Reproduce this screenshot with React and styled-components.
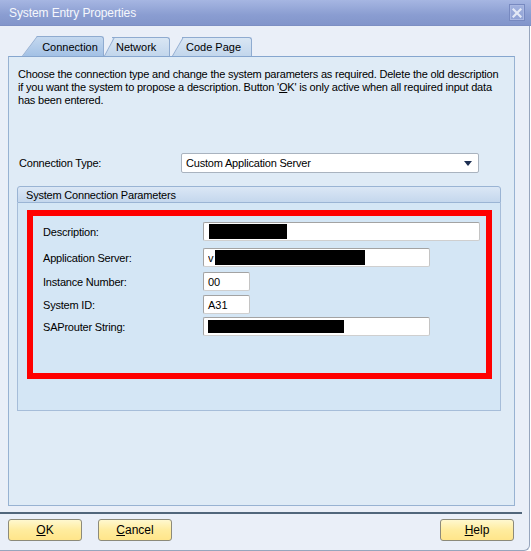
import React from 'react';
import styled, { createGlobalStyle } from 'styled-components';

const GlobalStyle = createGlobalStyle`
  html, body {
    margin: 0;
    padding: 0;
    background: #ffffff;
  }
  body {
    font-family: "Liberation Sans", Arial, sans-serif;
    font-size: 11px;
    color: #000;
  }
`;

const Window = styled.div`
  width: 531px;
  height: 551px;
  display: flex;
  flex-direction: column;
  overflow: hidden;
`;

const TitleBar = styled.div`
  height: 26px;
  flex: none;
  display: flex;
  align-items: center;
  justify-content: space-between;
  padding: 0 6px 0 9px;
  box-sizing: border-box;
  background: linear-gradient(#a6b6e2, #8a9dd1 60%, #8295cb);
  border-bottom: 1px solid #7d8fc3;
  color: #f5f7fc;
  font-size: 12px;
  letter-spacing: -0.1px;
`;

const CloseButton = styled.div`
  width: 16px;
  height: 17px;
  box-sizing: border-box;
  border: 1px solid #7789c0;
  background: linear-gradient(#a2b2df, #8fa1d4);
  box-shadow: inset 0 0 0 1px #aab8e2;
  display: flex;
  align-items: center;
  justify-content: center;
`;

const Body = styled.div`
  flex: 1;
  display: flex;
  flex-direction: column;
  background: #eaeff8;
  border-right: 1px solid #97a5bd;
  border-bottom: 1px solid #97a5bd;
  border-bottom-right-radius: 6px;
  width: 530px;
  box-sizing: border-box;
`;

const TabStrip = styled.div`
  display: flex;
  align-items: flex-end;
  height: 20px;
  margin-top: 10px;
  padding-left: 37px;
  position: relative;
  z-index: 1;
`;

const Tab = styled.div`
  position: relative;
  height: ${p => (p.$active ? 20 : 19)}px;
  width: ${p => p.$w}px;
  margin-left: ${p => p.$ml || 0}px;
  box-sizing: border-box;
  display: flex;
  align-items: center;
  justify-content: ${p => (p.$active ? 'center' : 'flex-start')};
  padding-left: ${p => (p.$active ? 0 : 4)}px;
  border-top: 1px solid #8fabd0;
  border-right: 1px solid #8fabd0;
  border-top-right-radius: 3px;
  background: ${p =>
    p.$active
      ? 'linear-gradient(#c4d8ef, #a3c1e5)'
      : 'linear-gradient(#d9e6f4, #c2d6ec)'};
  z-index: ${p => (p.$active ? 3 : p.$z)};
  color: #000;
  font-size: 11px;

  &::before {
    content: '';
    position: absolute;
    top: -1px;
    bottom: 0;
    left: -${p => p.$slant}px;
    width: ${p => p.$slant + 4}px;
    background: inherit;
    border-left: 1px solid #8fabd0;
    border-top: 1px solid #8fabd0;
    transform: skewX(-${p => p.$angle}deg);
    transform-origin: bottom left;
    z-index: -1;
  }
`;

const TabLabel = styled.span`
  position: relative;
`;

const Panel = styled.div`
  margin: 0 0 0 8px;
  width: 507px;
  height: 450px;
  box-sizing: border-box;
  background: #dfebf6;
  border: 1px solid #98b2d2;
  border-top-color: #86a6cf;
  padding: 11px 12px 0 9px;
  display: flex;
  flex-direction: column;
`;

const Intro = styled.p`
  margin: 0;
  line-height: 13px;
  white-space: nowrap;
  letter-spacing: -0.2px;
`;

const Underline = styled.span`
  text-decoration: underline;
`;

const TypeRow = styled.div`
  display: flex;
  align-items: center;
  margin-top: 46px;
  padding-left: 1px;
`;

const FieldLabel = styled.div`
  width: ${p => p.$w}px;
  flex: none;
  letter-spacing: -0.2px;
`;

const Select = styled.div`
  width: 298px;
  height: 20px;
  box-sizing: border-box;
  background: #fff;
  border: 1px solid #a9b3bf;
  border-radius: 2px;
  display: flex;
  align-items: center;
  justify-content: space-between;
  padding: 0 6px 0 4px;
  letter-spacing: -0.2px;
`;

const Caret = styled.span`
  width: 0;
  height: 0;
  border-left: 4px solid transparent;
  border-right: 4px solid transparent;
  border-top: 5px solid #1d2f52;
`;

const Group = styled.div`
  margin: 13px 0 0 -1px;
  width: 484px;
  height: 225px;
  display: flex;
  flex-direction: column;
`;

const GroupHeader = styled.div`
  height: 17px;
  box-sizing: border-box;
  border: 1px solid #9ab4d4;
  border-radius: 3px 3px 0 0;
  background: linear-gradient(#dbe7f5, #c4d7ed);
  padding-left: 8px;
  display: flex;
  align-items: center;
  letter-spacing: -0.2px;
`;

const GroupBody = styled.div`
  flex: 1;
  background: #d4e6f5;
  border: 1px solid #a6bdd9;
  border-top: none;
  padding: 7px 0 0 9px;
`;

const Highlight = styled.div`
  width: 465px;
  height: 169px;
  box-sizing: border-box;
  border: 6px solid #ff0000;
  padding-left: 10px;
  display: flex;
  flex-direction: column;
`;

const FieldRow = styled.div`
  display: flex;
  align-items: center;
  margin-top: ${p => p.$mt}px;
`;

const Input = styled.div`
  width: ${p => p.$w}px;
  height: 19px;
  box-sizing: border-box;
  background: #fff;
  border: 1px solid #a3a3a3;
  border-bottom-color: #cfcfcf;
  border-right-color: #c4c4c4;
  border-radius: 2px;
  display: flex;
  align-items: center;
  padding-left: ${p => p.$pl ?? 4}px;
  overflow: hidden;
  white-space: nowrap;
`;

const Redacted = styled.span`
  display: inline-block;
  flex: none;
  width: ${p => p.$w}px;
  height: ${p => p.$h || 15}px;
  background: #000;
`;

const Stray = styled.span`
  font-size: 11px;
  width: ${p => p.$w}px;
  overflow: hidden;
  flex: none;
`;

const Spacer = styled.div`
  flex: 1;
`;

const Separator = styled.div`
  height: 2px;
  width: 522px;
  background: #51667b;
  margin-top: 6px;
`;

const ButtonBar = styled.div`
  display: flex;
  align-items: center;
  padding: 5px 15px 0 8px;
  gap: 16px;
`;

const Button = styled.button`
  width: 74px;
  height: 22px;
  border: 1px solid #8c8a7a;
  border-radius: 3px;
  background: linear-gradient(#fff8cf, #ffec9e 50%, #ffe58a);
  font-family: "Liberation Sans", Arial, sans-serif;
  font-size: 12px;
  color: #000;
  padding: 0;
  cursor: pointer;
`;

const CloseIcon = () => (
  <svg width="10" height="10" viewBox="0 0 10 10">
    <path d="M1.5 1.5 L8.5 8.5 M8.5 1.5 L1.5 8.5" stroke="#e3e9f6" strokeWidth="2.2" strokeLinecap="square" />
  </svg>
);

const fields = [
  { label: 'Description:', w: 277, mt: 6, pl: 5, value: <Redacted $w={78} /> },
  { label: 'Application Server:', w: 227, mt: 7, value: <><Stray $w={7}>v</Stray><Redacted $w={150} /></> },
  { label: 'Instance Number:', w: 47, mt: 5, value: '00' },
  { label: 'System ID:', w: 47, mt: 4, value: 'A31' },
  { label: 'SAProuter String:', w: 227, mt: 3, value: <Redacted $w={136} $h={13} /> },
];

export default function App() {
  return (
    <>
      <GlobalStyle />
      <Window>
        <TitleBar>
          <span>System Entry Properties</span>
          <CloseButton>
            <CloseIcon />
          </CloseButton>
        </TitleBar>
        <Body>
          <TabStrip>
            <Tab $active $w={67} $slant={15} $angle={37}>
              <TabLabel>Connection</TabLabel>
            </Tab>
            <Tab $w={58} $ml={8} $slant={8} $angle={28} $z={2}>
              <TabLabel>Network</TabLabel>
            </Tab>
            <Tab $w={70} $ml={12} $slant={10} $angle={30} $z={1}>
              <TabLabel>Code Page</TabLabel>
            </Tab>
          </TabStrip>
          <Panel>
            <Intro>
              Choose the connection type and change the system parameters as required. Delete the old description
              <br />
              if you want the system to propose a description. Button '<Underline>O</Underline>K' is only active when all required input data
              <br />
              has been entered.
            </Intro>
            <TypeRow>
              <FieldLabel $w={162}>Connection Type:</FieldLabel>
              <Select>
                <span>Custom Application Server</span>
                <Caret />
              </Select>
            </TypeRow>
            <Group>
              <GroupHeader>System Connection Parameters</GroupHeader>
              <GroupBody>
                <Highlight>
                  {fields.map(f => (
                    <FieldRow key={f.label} $mt={f.mt}>
                      <FieldLabel $w={160}>{f.label}</FieldLabel>
                      <Input $w={f.w} $pl={f.pl}>{f.value}</Input>
                    </FieldRow>
                  ))}
                </Highlight>
              </GroupBody>
            </Group>
          </Panel>
          <Separator />
          <ButtonBar>
            <Button>
              <Underline>O</Underline>K
            </Button>
            <Button>
              <Underline>C</Underline>ancel
            </Button>
            <Spacer />
            <Button>
              <Underline>H</Underline>elp
            </Button>
          </ButtonBar>
        </Body>
      </Window>
    </>
  );
}
